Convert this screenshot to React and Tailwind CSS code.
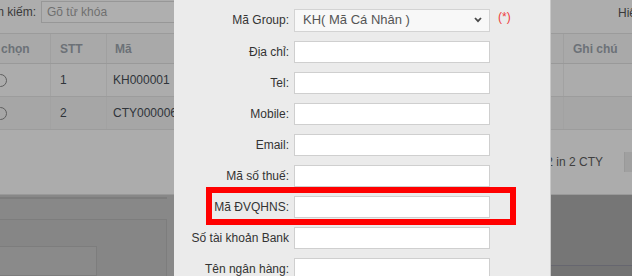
import React from 'react'

const FIELDS = [
  { label: 'Địa chỉ:' },
  { label: 'Tel:' },
  { label: 'Mobile:' },
  { label: 'Email:' },
  { label: 'Mã số thuế:' },
  { label: 'Mã ĐVQHNS:' },
  { label: 'Số tài khoản Bank' },
  { label: 'Tên ngân hàng:' },
]

const ROWS = [
  { stt: '1', code: 'KH000001', bg: 'bg-[#acacac]' },
  { stt: '2', code: 'CTY000006', bg: 'bg-[#a6a6a6]' },
]

function BackgroundPage() {
  return (
    <div className="flex flex-col w-[632px] h-[276px] overflow-hidden">
      {/* search bar */}
      <div className="flex items-start h-[33px] bg-[#adadad] shrink-0">
        <div className="w-[36px] h-[24px] flex items-center justify-end overflow-hidden whitespace-nowrap text-[12px] text-[#3a3a3a]">
          <span className="shrink-0">Tìm kiếm:</span>
        </div>
        <div className="ml-[5px] mt-[1px] w-[320px] h-[22px] border border-[#979797] bg-[#afafaf] flex items-center px-[5px] text-[12px] text-[#6f6f6f]">
          Gõ từ khóa
        </div>
        <div className="flex-1" />
        <div className="w-[14px] h-[26px] flex items-center overflow-hidden whitespace-nowrap text-[12px] text-[#3a3a3a]">
          <span className="shrink-0">Hiển thị</span>
        </div>
      </div>

      {/* table */}
      <div className="border-t border-[#9b9b9b] shrink-0">
        <div className="grid grid-cols-[51px_56px_1fr_69px] h-[30px] bg-[#a9a9a9] border-b border-[#999] text-[12px] font-bold text-[#6c7177]">
          <div className="flex items-center overflow-hidden whitespace-nowrap border-r border-[#a0a0a0]">
            <span className="shrink-0 -ml-[25px]">Lựa chọn</span>
          </div>
          <div className="flex items-center px-[9px] border-r border-[#a0a0a0]">STT</div>
          <div className="flex items-center px-[8px]">Mã</div>
          <div className="flex items-center px-[9px] border-l border-[#a0a0a0] whitespace-nowrap">Ghi chú</div>
        </div>
        {ROWS.map((r) => (
          <div key={r.stt} className={`grid grid-cols-[51px_56px_1fr_69px] h-[33px] ${r.bg} border-b border-[#9c9c9c] text-[12px] text-[#2f343a]`}>
            <div className="flex items-center overflow-hidden border-r border-[#a2a2a2]">
              <span className="shrink-0 -ml-[6px] w-[13px] h-[13px] rounded-full border border-[#5e5e5e]" />
            </div>
            <div className="flex items-center px-[9px] border-r border-[#a2a2a2]">{r.stt}</div>
            <div className="flex items-center px-[6px]">{r.code}</div>
            <div className="border-l border-[#a2a2a2]" />
          </div>
        ))}
      </div>

      {/* pager */}
      <div className="flex items-center justify-end h-[65px] bg-[#acacac] border-b border-[#999] shrink-0 overflow-hidden">
        <span className="text-[12px] text-[#3f3f3f] whitespace-nowrap mr-[21px]">Hiển thị 1 - 2 in 2 CTY</span>
        <div className="w-[8px] h-[20px] bg-[#a0a0a0] border-l border-[#999]" />
      </div>

      {/* lower panel */}
      <div className="flex flex-1 min-h-0">
        <div className="w-[300px] bg-[#888888] flex flex-col pt-[2px] pl-[0px]">
          <div className="w-[167px] h-[18px] border border-[#7d7d7d] border-l-0 bg-[#868686]" />
          <div className="mt-[20px] w-[167px] h-[60px] border border-[#7d7d7d] border-l-0 bg-[#868686] pt-[26px]">
            <div className="w-[97px] h-[30px] border border-[#7d7d7d] border-l-0 bg-[#8a8a8a]" />
          </div>
        </div>
        <div className="flex-1 flex flex-col bg-[#767676]">
          <div className="h-[70px]" />
          <div className="h-[1px] bg-[#66666f]" />
          <div className="flex-1 bg-[#737373]" />
        </div>
      </div>
    </div>
  )
}

function Chevron() {
  return (
    <svg width="8" height="6" viewBox="0 0 8 6" className="shrink-0">
      <polyline points="1,1 4,4.2 7,1" fill="none" stroke="#4a4a4a" strokeWidth="1.8" />
    </svg>
  )
}

function CustomerModal() {
  return (
    <div className="absolute left-[174px] top-0 w-[377px] h-[276px] bg-[#ebebeb] border-r border-[#c8c8c8] pt-[4px] overflow-hidden">
      <div className="grid grid-cols-[115px_196px_auto] gap-x-[5px] text-[12px] text-[#333]">
        <div className="h-[32px] flex items-center justify-end whitespace-nowrap">Mã Group:</div>
        <div className="h-[32px] flex items-center">
          <div className="w-full h-[23px] bg-[#f8f8f8] border border-[#d3d3d3] flex items-center justify-between pl-[8px] pr-[7px] text-[13px] text-[#555]">
            <span>KH( Mã Cá Nhân )</span>
            <Chevron />
          </div>
        </div>
        <div className="h-[32px] flex items-center pl-[3px]">
          <span className="text-[#ee3c3c] -translate-y-[3px]">(*)</span>
        </div>

        {FIELDS.map((f) => (
          <React.Fragment key={f.label}>
            <div className="h-[31px] flex items-center justify-end whitespace-nowrap">{f.label}</div>
            <div className="h-[31px] flex items-center">
              <div className="w-full h-[22px] bg-white border border-[#cfcfcf]" />
            </div>
            <div />
          </React.Fragment>
        ))}
      </div>

      {/* highlight box */}
      <div className="absolute left-[32px] top-[187px] w-[310px] h-[38px] border-[6px] border-[#ff0000]" />
    </div>
  )
}

export default function App() {
  return (
    <div className="relative w-[632px] h-[276px] overflow-hidden font-['Liberation_Sans',Arial,sans-serif]">
      <BackgroundPage />
      <CustomerModal />
    </div>
  )
}
